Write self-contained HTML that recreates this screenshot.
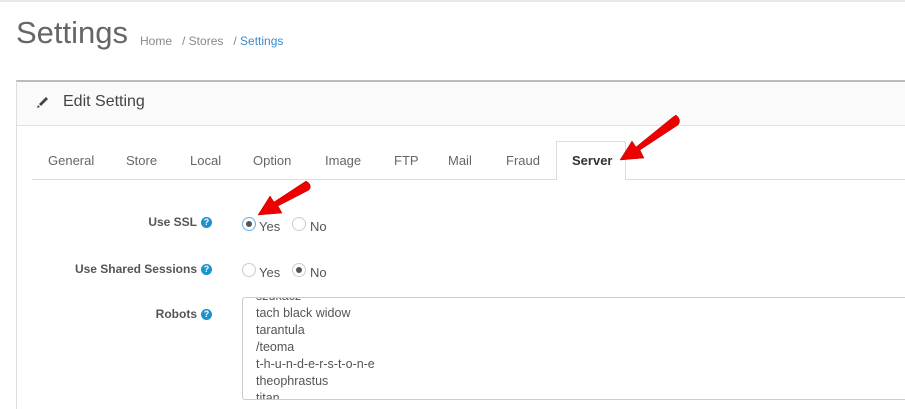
<!DOCTYPE html>
<html><head><meta charset="utf-8"><style>
body{margin:0;width:905px;height:409px;overflow:hidden;background:#fff;font-family:"Liberation Sans",sans-serif;position:relative}
.a{position:absolute}
.tab{position:absolute;top:153px;font-size:13px;color:#666}
.lbl{position:absolute;font-size:12px;font-weight:bold;color:#555;text-align:right;width:212px;left:0}
.q{display:inline-block;width:11px;height:11px;border-radius:50%;background:#1e91cf;color:#fff;font-size:9px;line-height:11px;text-align:center;vertical-align:1px;margin-left:4px}
.r{position:absolute;width:14px;height:14px;border:1px solid #ccc;border-radius:50%;background:#fff;box-sizing:border-box}
.r.on::after{content:"";position:absolute;left:3px;top:3px;width:6px;height:6px;border-radius:50%;background:#555}
.rt{position:absolute;font-size:13px;color:#555}
.ta div{height:17px}
</style></head><body>
<div class="a" style="left:0;top:0;width:905px;height:2px;background:#e8e8e8"></div>
<div class="a" style="left:16px;top:15px;font-size:31px;color:#666">Settings</div>
<div class="a" style="left:140px;top:34px;font-size:12px;color:#888">Home &nbsp;&nbsp;/ Stores &nbsp;&nbsp;/ <span style="color:#3a8ad0">Settings</span></div>
<div class="a" style="left:16px;top:80px;width:889px;height:329px;border-top:2px solid #bbb;border-left:1px solid #ddd;box-sizing:border-box"></div>
<div class="a" style="left:17px;top:82px;width:888px;height:43px;background:#fafafa;border-bottom:1px solid #e3e3e3"></div>
<svg class="a" style="left:36px;top:95px" width="14" height="14" viewBox="0 0 14 14"><path d="M3 9 L10 2 L12 4 L5 11 Z" fill="#444"/><path d="M2 10 L4 12 L1 13 Z" fill="#444"/></svg>
<div class="a" style="left:63px;top:93px;font-size:16px;color:#444">Edit Setting</div>
<div class="a" style="left:32px;top:179px;width:873px;height:1px;background:#ddd"></div>
<div class="a" style="left:556px;top:141px;width:70px;height:39px;border:1px solid #ddd;border-bottom:none;background:#fff;box-sizing:border-box"></div>
<div class="tab" style="left:48px">General</div><div class="tab" style="left:126px">Store</div><div class="tab" style="left:190px">Local</div><div class="tab" style="left:253px">Option</div><div class="tab" style="left:325px">Image</div><div class="tab" style="left:394px">FTP</div><div class="tab" style="left:448px">Mail</div><div class="tab" style="left:506px">Fraud</div>
<div class="tab" style="left:572px;font-weight:bold;color:#333">Server</div>
<div class="lbl" style="top:215px">Use SSL<span class="q">?</span></div>
<div class="lbl" style="top:262px">Use Shared Sessions<span class="q">?</span></div>
<div class="lbl" style="top:307px">Robots<span class="q">?</span></div>
<div class="r on" style="left:242px;top:217px;border-color:#66afe9"></div><div class="rt" style="left:259px;top:219px">Yes</div>
<div class="r" style="left:292px;top:217px"></div><div class="rt" style="left:310px;top:219px">No</div>
<div class="r" style="left:242px;top:263px"></div><div class="rt" style="left:259px;top:265px">Yes</div>
<div class="r on" style="left:292px;top:263px"></div><div class="rt" style="left:310px;top:265px">No</div>
<div class="a ta" style="left:242px;top:297px;width:670px;height:103px;border:1px solid #ccc;border-radius:3px;box-sizing:border-box;overflow:hidden;font-size:12.5px;color:#555;padding-left:13px">
<div style="margin-top:-9px">szukacz</div><div>tach black widow</div><div>tarantula</div><div>/teoma</div><div>t-h-u-n-d-e-r-s-t-o-n-e</div><div>theophrastus</div><div>titan</div></div>
<svg class="a" style="left:0;top:0" width="905" height="409">
<g fill="#e00" stroke="#b00" stroke-width="0.5">
<path d="M676 115 Q682 120 678 125 L640 150 L644 158 L620 160 L632 141 L636 147 L673 117 Z"/>
<path d="M306 181 Q313 185 309 190 L278 206 L282 213 L258 215 L270 196 L274 202 L303 183 Z"/>
</g></svg>
</body></html>
